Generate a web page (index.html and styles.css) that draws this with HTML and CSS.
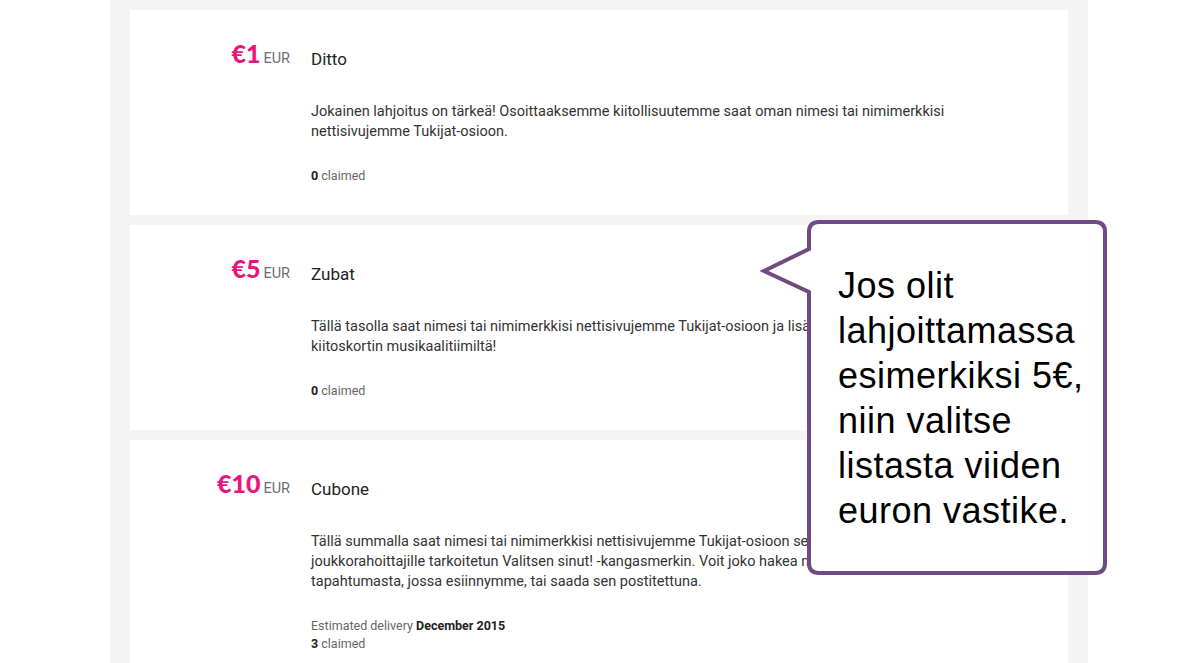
FILE: index.html
```html
<!DOCTYPE html>
<html lang="fi">
  <head>
    <meta charset="UTF-8" />
    <meta name="viewport" content="width=device-width, initial-scale=1.0" />
    <title>Vastikkeet</title>
    <link rel="stylesheet" href="styles.css">
  </head>

  <body>
    <div class="perks">
      <div class="perk">
        <div class="price"><span class="amount">€1</span><span class="currency">EUR</span></div>
        <div class="info">
          <div class="title">Ditto</div>
          <p class="desc">Jokainen lahjoitus on tärkeä! Osoittaaksemme kiitollisuutemme saat oman nimesi tai nimimerkkisi nettisivujemme Tukijat-osioon.</p>
          <div class="meta"><b>0</b> claimed</div>
        </div>
      </div>

      <div class="perk">
        <div class="price"><span class="amount">€5</span><span class="currency">EUR</span></div>
        <div class="info">
          <div class="title">Zubat</div>
          <p class="desc">Tällä tasolla saat nimesi tai nimimerkkisi nettisivujemme Tukijat-osioon ja lisäksi sähköisen kiitoskortin musikaalitiimiltä!</p>
          <div class="meta"><b>0</b> claimed</div>
        </div>
      </div>

      <div class="perk">
        <div class="price"><span class="amount">€10</span><span class="currency">EUR</span></div>
        <div class="info">
          <div class="title">Cubone</div>
          <p class="desc">Tällä summalla saat nimesi tai nimimerkkisi nettisivujemme Tukijat-osioon sekä vain joukkorahoittajille tarkoitetun Valitsen sinut! -kangasmerkin. Voit joko hakea merkin jostakin tapahtumasta, jossa esiinnymme, tai saada sen postitettuna.</p>
          <div class="meta">Estimated delivery <b>December 2015</b></div>
          <div class="meta"><b>3</b> claimed</div>
        </div>
      </div>
    </div>

    <div class="callout">
      <svg class="bubble" width="350" height="360" viewBox="0 0 350 360">
        <path d="M59 4 H335 Q345 4 345 14 V345 Q345 355 335 355 H59 Q49 355 49 345 V74 L4 53 L49 31 V14 Q49 4 59 4 Z"
              fill="#fff" stroke="#704a80" stroke-width="4" />
      </svg>
      <p>Jos olit lahjoittamassa esimerkiksi 5€, niin valitse listasta viiden euron vastike.</p>
    </div>
  </body>
</html>
```

FILE: styles.css
```css
* {
  box-sizing: border-box;
}

html,
body {
  margin: 0;
  height: 100%;
  background-color: #fff;
  overflow: hidden;
}

body {
  position: relative;
  font-family: Roboto, "Liberation Sans", sans-serif;
  color: #333;
}

.perks {
  width: 978px;
  min-height: 100%;
  margin-left: 110px;
  padding: 10px 20px 0 20px;
  background-color: #f4f4f4;
  display: flex;
  flex-direction: column;
  gap: 10px;
}

.perk {
  display: grid;
  grid-template-columns: 160px 1fr;
  column-gap: 21px;
  padding: 37px 40px 30px 0;
  background-color: #fff;
}

.price {
  display: flex;
  justify-content: flex-end;
  align-items: flex-start;
  gap: 3px;
  height: 24px;
  white-space: nowrap;
}

.price .amount {
  margin-top: -6px;
  font-family: Lato, "Open Sans", sans-serif;
  font-weight: 900;
  font-size: 25px;
  line-height: 24px;
  letter-spacing: 0;
  color: #e8157a;
}

.price .currency {
  font-size: 14.5px;
  line-height: 24px;
  color: #6d6d6d;
}

.info {
  max-width: 645px;
}

.title {
  font-size: 17px;
  line-height: 24px;
  color: #222;
}

.desc {
  margin: 31px 0 25px 0;
  font-size: 14.5px;
  line-height: 20px;
}

.meta {
  font-size: 12.5px;
  line-height: 18px;
  color: #666;
}

.meta b {
  color: #222;
}

.callout {
  position: absolute;
  left: 760px;
  top: 218px;
  width: 350px;
  height: 360px;
  padding: 45px 0 0 78px;
}

.callout .bubble {
  position: absolute;
  top: 0;
  left: 0;
}

.callout p {
  position: relative;
  margin: 0;
  width: 262px;
  font-family: "Liberation Sans", Arial, sans-serif;
  font-size: 36px;
  letter-spacing: 0.5px;
  line-height: 45px;
  color: #000;
}
```
